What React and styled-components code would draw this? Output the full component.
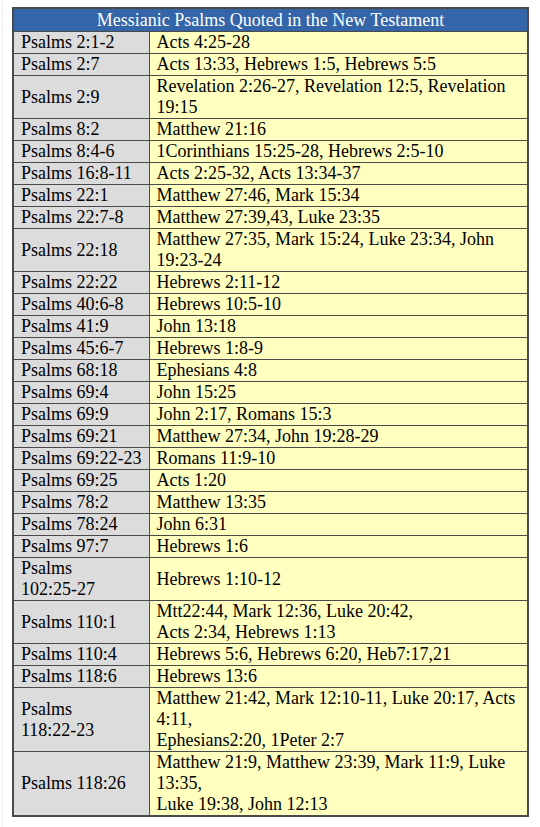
import React from "react";
import styled, { createGlobalStyle } from "styled-components";

const rows = [
  ["2:1-2", "Acts 4:25-28"],
  ["2:7", "Acts 13:33, Hebrews 1:5, Hebrews 5:5"],
  ["2:9", "Revelation 2:26-27, Revelation 12:5, Revelation 19:15"],
  ["8:2", "Matthew 21:16"],
  ["8:4-6", "1Corinthians 15:25-28, Hebrews 2:5-10"],
  ["16:8-11", "Acts 2:25-32, Acts 13:34-37"],
  ["22:1", "Matthew 27:46, Mark 15:34"],
  ["22:7-8", "Matthew 27:39,43, Luke 23:35"],
  ["22:18", "Matthew 27:35, Mark 15:24, Luke 23:34, John 19:23-24"],
  ["22:22", "Hebrews 2:11-12"],
  ["40:6-8", "Hebrews 10:5-10"],
  ["41:9", "John 13:18"],
  ["45:6-7", "Hebrews 1:8-9"],
  ["68:18", "Ephesians 4:8"],
  ["69:4", "John 15:25"],
  ["69:9", "John 2:17, Romans 15:3"],
  ["69:21", "Matthew 27:34, John 19:28-29"],
  ["69:22-23", "Romans 11:9-10"],
  ["69:25", "Acts 1:20"],
  ["78:2", "Matthew 13:35"],
  ["78:24", "John 6:31"],
  ["97:7", "Hebrews 1:6"],
  ["102:25-27", "Hebrews 1:10-12"],
  ["110:1", ["Mtt22:44, Mark 12:36, Luke 20:42,", "Acts 2:34, Hebrews 1:13"]],
  ["110:4", "Hebrews 5:6, Hebrews 6:20, Heb7:17,21"],
  ["118:6", "Hebrews 13:6"],
  ["118:22-23", ["Matthew 21:42, Mark 12:10-11, Luke 20:17, Acts 4:11,", "Ephesians2:20, 1Peter 2:7"]],
  ["118:26", ["Matthew 21:9, Matthew 23:39, Mark 11:9, Luke 13:35,", "Luke 19:38, John 12:13"]],
];

const GlobalStyle = createGlobalStyle`
  body {
    margin: 0;
    background: #fff;
    font-family: "Liberation Serif", "Times New Roman", serif;
  }
`;

const Page = styled.div`
  margin-left: 2px;
  border-left: 1px solid #e6edf6;
  padding: 7px 0 12px 9px;
`;

const Table = styled.table`
  border-collapse: collapse;
  table-layout: fixed;
  width: 517px;
  border: 2px solid #4a4a4a;
  font-size: 18px;
  color: #000;
`;

const Title = styled.th`
  background: #3465a8;
  color: #fff;
  font-weight: normal;
  text-align: center;
  padding: 1px 0 0;
  border: 1px solid #4a4a4a;
`;

const Cell = styled.td`
  background: ${(p) => (p.$ref ? "#dcdcdc" : "#ffffc0")};
  border: 1px solid #4a4a4a;
  padding: 0 6px 0 7px;
  vertical-align: middle;
  line-height: normal;
`;

const Verse = styled.span`
  white-space: nowrap;
`;

const Quotes = ({ value }) =>
  Array.isArray(value)
    ? value.map((line, i) => (
        <React.Fragment key={i}>
          {i > 0 && <br />}
          {line}
        </React.Fragment>
      ))
    : value;

export default function App() {
  return (
    <Page>
      <GlobalStyle />
      <Table>
        <colgroup>
          <col style={{ width: 136 }} />
          <col />
        </colgroup>
        <thead>
          <tr>
            <Title colSpan={2}>Messianic Psalms Quoted in the New Testament</Title>
          </tr>
        </thead>
        <tbody>
          {rows.map(([verse, nt]) => (
            <tr key={verse}>
              <Cell $ref>
                Psalms <Verse>{verse}</Verse>
              </Cell>
              <Cell>
                <Quotes value={nt} />
              </Cell>
            </tr>
          ))}
        </tbody>
      </Table>
    </Page>
  );
}
